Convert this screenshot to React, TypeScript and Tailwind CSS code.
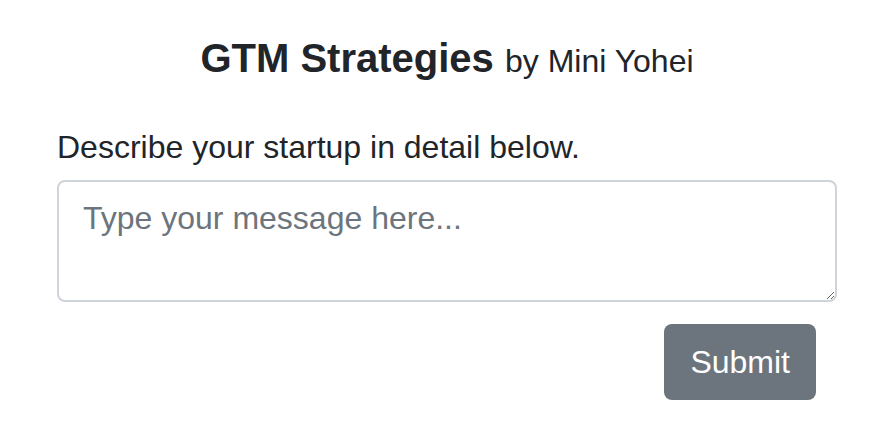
export default function App() {
  return (
    <div className="min-h-screen bg-white text-[#212529] font-['Liberation_Sans',Arial,sans-serif]">
      <div className="px-[57px] pt-[34px]">
        <h5 className="text-center text-[40px] leading-[48px] font-bold">
          GTM Strategies <span className="text-[32px] font-normal">by Mini Yohei</span>
        </h5>
        <form className="mt-[38px]" onSubmit={(e) => e.preventDefault()}>
          <label className="block text-[32px] leading-[48px] mb-[9px]">
            Describe your startup in detail below.
          </label>
          <textarea
            rows={2}
            placeholder="Type your message here..."
            className="block w-full h-[122px] rounded-[8px] border-2 border-[#ced4da] bg-white px-[24px] py-[12px] text-[32px] leading-[48px] text-[#212529] placeholder:text-[#6c757d] outline-none"
          />
          <div className="flex justify-end pr-[21px] mt-[22px]">
            <button
              type="submit"
              className="h-[76px] rounded-[8px] bg-[#6c757d] px-[26px] text-[32px] leading-[48px] text-white"
            >
              Submit
            </button>
          </div>
        </form>
      </div>
    </div>
  );
}
